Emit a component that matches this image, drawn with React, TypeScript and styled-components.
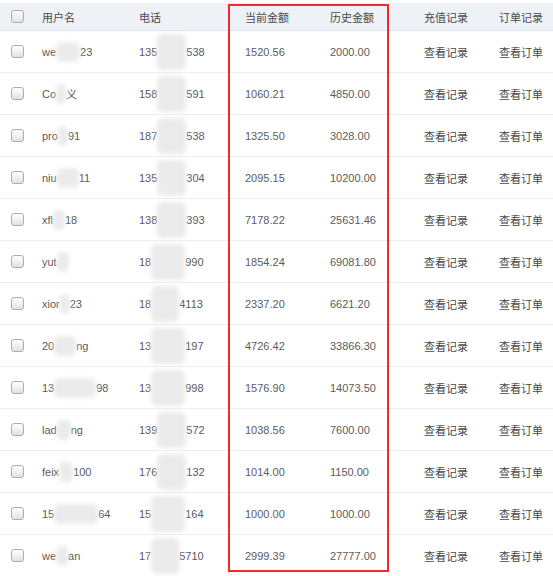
import React from "react";
import styled, { createGlobalStyle } from "styled-components";

const Global = createGlobalStyle`
  html, body { margin: 0; padding: 0; background: #fff; }
  body { font-family: "Liberation Sans", "Noto Sans CJK SC", sans-serif; }
`;

const COLS = "42px 97px 106px 85px 94px 75px 1fr";

const Wrap = styled.div`
  position: relative;
  width: 553px;
  height: 576px;
  overflow: hidden;
  padding-top: 3px;
  box-sizing: border-box;
`;

const HeaderRow = styled.div`
  display: grid;
  grid-template-columns: ${COLS};
  align-items: center;
  height: 27px;
  background: #eef1f6;
  border-bottom: 1px solid #dfe5ec;
  color: #4a4a4a;
  font-size: 11px;
`;

const Row = styled.div`
  display: grid;
  grid-template-columns: ${COLS};
  align-items: center;
  height: 42px;
  box-sizing: border-box;
  border-bottom: 1px solid #eeeeee;
  font-size: 11px;
  color: #5c5c5c;
`;

const Cell = styled.div<{ $dark?: boolean }>`
  display: flex;
  align-items: center;
  white-space: nowrap;
  color: ${(p) => (p.$dark ? "#484848" : "inherit")};
`;

const CheckCell = styled.div`
  display: flex;
  align-items: center;
  padding-left: 11px;
`;

const Check = styled.span`
  display: inline-block;
  width: 11px;
  height: 11px;
  border: 1px solid #adadad;
  border-radius: 3px;
  background: linear-gradient(#ffffff, #e2e2e2);
`;

const Blur = styled.span<{ $w: number; $h: number }>`
  display: inline-block;
  width: ${(p) => p.$w}px;
  height: ${(p) => p.$h}px;
  background: #ebebeb;
  border-radius: 5px;
  filter: blur(2px);
`;

const Highlight = styled.div`
  position: absolute;
  left: 228px;
  top: 4px;
  width: 161px;
  height: 568px;
  box-sizing: border-box;
  border: 2px solid #ee2b2f;
  pointer-events: none;
`;

type R = {
  u1: string; ub: number; u2: string;
  p1: string; pb: number; p2: string;
  cur: string; hist: string;
};

const rows: R[] = [
  { u1: "we", ub: 24, u2: "23", p1: "135", pb: 29, p2: "538", cur: "1520.56", hist: "2000.00" },
  { u1: "Co", ub: 10, u2: "义", p1: "158", pb: 29, p2: "591", cur: "1060.21", hist: "4850.00" },
  { u1: "pro", ub: 10, u2: "91", p1: "187", pb: 29, p2: "538", cur: "1325.50", hist: "3028.00" },
  { u1: "niu", ub: 22, u2: "11", p1: "135", pb: 29, p2: "304", cur: "2095.15", hist: "10200.00" },
  { u1: "xfl", ub: 12, u2: "18", p1: "138", pb: 29, p2: "393", cur: "7178.22", hist: "25631.46" },
  { u1: "yut", ub: 12, u2: "", p1: "18", pb: 34, p2: "990", cur: "1854.24", hist: "69081.80" },
  { u1: "xior", ub: 10, u2: "23", p1: "18", pb: 28, p2: "4113", cur: "2337.20", hist: "6621.20" },
  { u1: "20", ub: 22, u2: "ng", p1: "13", pb: 34, p2: "197", cur: "4726.42", hist: "33866.30" },
  { u1: "13", ub: 42, u2: "98", p1: "13", pb: 34, p2: "998", cur: "1576.90", hist: "14073.50" },
  { u1: "lad", ub: 14, u2: "ng", p1: "139", pb: 29, p2: "572", cur: "1038.56", hist: "7600.00" },
  { u1: "feix", ub: 14, u2: "100", p1: "176", pb: 29, p2: "132", cur: "1014.00", hist: "1150.00" },
  { u1: "15", ub: 44, u2: "64", p1: "15", pb: 34, p2: "164", cur: "1000.00", hist: "1000.00" },
  { u1: "we", ub: 12, u2: "an", p1: "17", pb: 28, p2: "5710", cur: "2999.39", hist: "27777.00" },
];

export default function App() {
  return (
    <Wrap>
      <Global />
      <HeaderRow>
        <CheckCell><Check /></CheckCell>
        <Cell>用户名</Cell>
        <Cell>电话</Cell>
        <Cell>当前金额</Cell>
        <Cell>历史金额</Cell>
        <Cell>充值记录</Cell>
        <Cell>订单记录</Cell>
      </HeaderRow>
      {rows.map((r, i) => (
        <Row key={i}>
          <CheckCell><Check /></CheckCell>
          <Cell>{r.u1}<Blur $w={r.ub} $h={20} />{r.u2}</Cell>
          <Cell>{r.p1}<Blur $w={r.pb} $h={36} />{r.p2}</Cell>
          <Cell>{r.cur}</Cell>
          <Cell>{r.hist}</Cell>
          <Cell $dark>查看记录</Cell>
          <Cell $dark>查看订单</Cell>
        </Row>
      ))}
      <Highlight />
    </Wrap>
  );
}
